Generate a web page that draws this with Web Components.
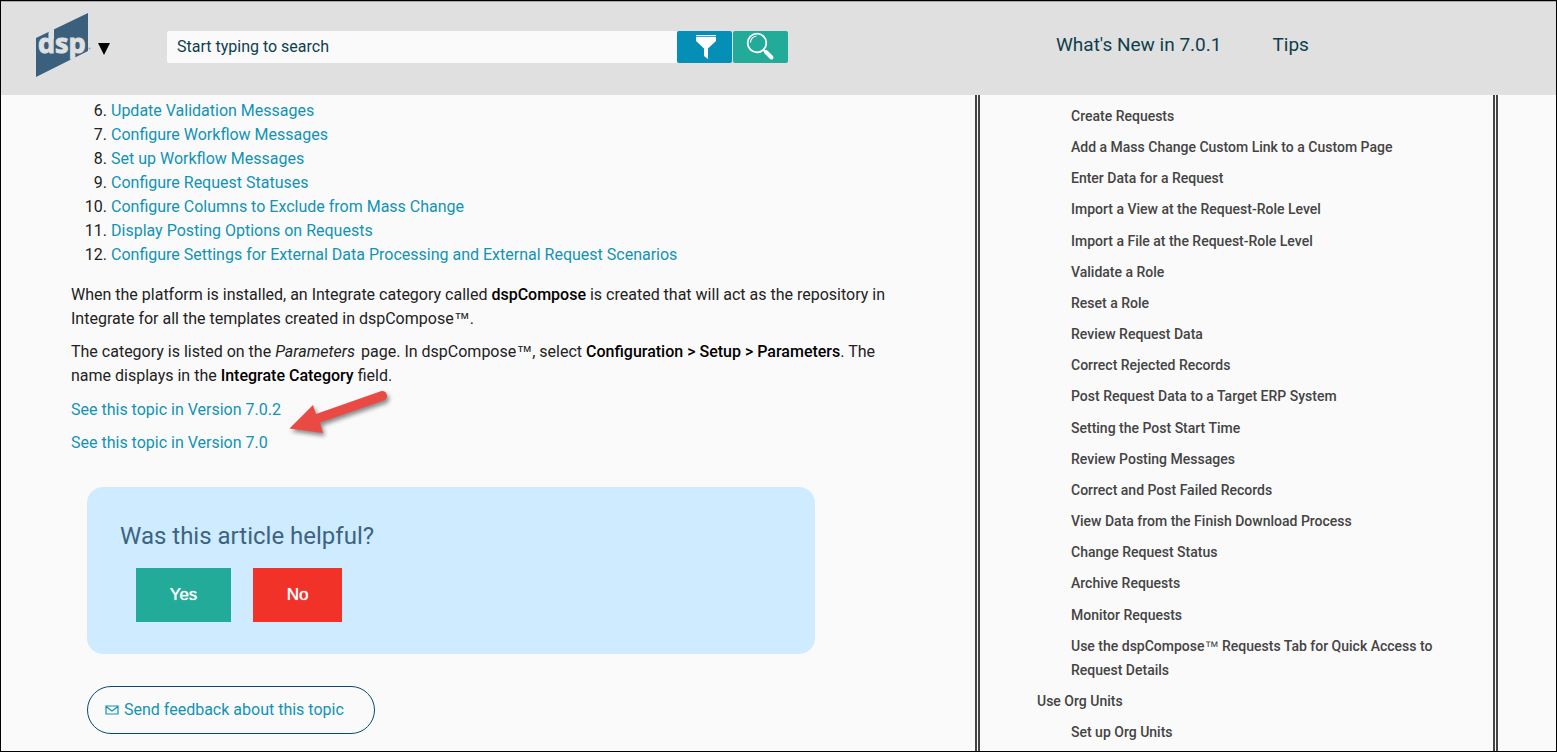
<!DOCTYPE html>
<html lang="en">
<head>
<meta charset="utf-8">
<title>dspCompose Help</title>
<style>
html{background:#000}
body{margin:0;font:16px/24px Roboto,sans-serif;color:#222;background:#fafafa}
</style>
</head>
<body>
<help-page></help-page>
<script>
const define = (name, html, setup) => customElements.define(name, class extends HTMLElement {
  connectedCallback() {
    if (this.shadowRoot) return;
    const t = document.createElement('template');
    t.innerHTML = html;
    this.attachShadow({mode: 'open'}).append(t.content.cloneNode(true));
    if (setup) setup(this.shadowRoot, this);
  }
});

define('dsp-logo', `
<style>
:host{display:block}
a{display:flex;align-items:center;gap:5px;text-decoration:none;color:#000}
svg{display:block}
.mark text{font:700 27px "Open Sans",sans-serif;fill:#e0e0e0;stroke:#e0e0e0;stroke-width:1}
.caret{margin-top:8px}
</style>
<a href="#home" aria-label="dsp home">
<svg class="mark" width="58" height="66" viewBox="0 0 58 66">
<path d="M1 26 L53 1 V39 L1 65Z" fill="#3a607d"/>
<path d="M14 17h5v10h-5z" fill="#e0e0e0"/>
<text x="3" y="41">dsp</text>
<circle cx="54.500" cy="36.500" r="1" fill="#8fa3b2"/>
</svg>
<svg class="caret" width="12" height="12" viewBox="0 0 12 12"><path d="M0 0H12L6 12Z" fill="#000"/></svg>
</a>`);

define('search-bar', `
<style>
:host{display:block}
form{display:flex;gap:1px;margin:0}
input{flex:1;min-width:0;height:32px;box-sizing:border-box;border:0;border-radius:2px 0 0 2px;background:#fafafa;padding:0 10px 2px;font:16px/24px Roboto,sans-serif;color:#0e3f4d;outline:0;margin-right:-1px}
input::placeholder{color:#0e3f4d;opacity:1}
button{width:55px;height:32px;border:0;border-radius:2px;padding:0;display:flex;align-items:center;justify-content:center;background:#058eb6}
button.go{background:#22ab98}
svg{display:block}
</style>
<form role="search">
<input type="text" aria-label="Search" placeholder="Start typing to search">
<button type="button" aria-label="Filter"><svg width="22" height="26" viewBox="0 0 22 26"><path d="M2 1h20v1.200H2zM2 3h20v4l-8 7.500V25l-4-3V14.500L2 7z" fill="#fff"/></svg></button>
<button type="submit" class="go" aria-label="Search"><svg width="30" height="30" viewBox="0 0 30 30" fill="none" stroke="#fff"><circle cx="11" cy="11" r="9.300" stroke-width="1.800"/><path d="M4.500 10.500a6.500 6.500 0 0 1 6-6.500" stroke-width="1.200"/><path d="M17.500 18l2.500 2.500" stroke-width="2"/><path d="M20 20l5.500 5.500" stroke-width="4" stroke-linecap="round"/></svg></button>
</form>`);

define('site-header', `
<style>
:host{display:grid;grid-template-columns:131px minmax(200px,621px) 1fr;align-items:start;height:94px;box-sizing:border-box;padding-left:35px;background:#e0e0e0;border-top:1px solid #aaa}
dsp-logo{margin-top:10px;margin-left:-1px}
search-bar{margin-top:29px}
nav{display:flex;gap:51px;margin:31px 0 0 268px}
a{font-size:19px;line-height:24px;color:#0e3f4d;text-decoration:none;white-space:nowrap}
</style>
<dsp-logo></dsp-logo>
<search-bar></search-bar>
<nav><a href="#new">What's New in 7.0.1</a><a href="#tips">Tips</a></nav>`);

define('step-list', `
<style>
:host{display:block}
ol{margin:0;padding-left:40px}
a{color:#1193b5;text-decoration:none}
</style>
<ol start="6"></ol>`, (root) => {
  const ol = root.querySelector('ol');
  ['Update Validation Messages', 'Configure Workflow Messages', 'Set up Workflow Messages', 'Configure Request Statuses', 'Configure Columns to Exclude from Mass Change', 'Display Posting Options on Requests', 'Configure Settings for External Data Processing and External Request Scenarios'].forEach(s => {
    const li = document.createElement('li'), a = document.createElement('a');
    a.href = '#'; a.textContent = s; li.append(a); ol.append(li);
  });
});

define('pointer-arrow', `
<style>:host{display:block;width:112px;height:56px}svg{display:block;overflow:visible;filter:drop-shadow(2px 3px 2px rgba(0,0,0,.45))}</style>
<svg width="112" height="56" viewBox="0 0 112 56" aria-hidden="true"><path d="M3.500 41.500L27 18L30 27L95.500 4A5 5 0 0 1 99 13L34 35.500L37 46Z" fill="#ea4a44"/></svg>`);

define('helpful-card', `
<style>
:host{display:block;box-sizing:border-box;background:#cfebff;border-radius:16px;padding:32px 33px 32px}
h2{margin:0 0 15px;font-size:24px;line-height:34px;font-weight:400;color:#3c6481}
div{display:flex;gap:22px;padding-left:16px}
button{width:95px;height:54px;border:0;padding:0;font:17px "Liberation Sans",Arial,sans-serif;color:#fff;text-shadow:0 0 1px #fff;background:#22ab98}
.no{width:89px;background:#f03228}
</style>
<h2>Was this article helpful?</h2>
<div><button type="button">Yes</button><button type="button" class="no">No</button></div>`);

define('feedback-link', `
<style>
:host{display:block}
a{display:inline-flex;align-items:center;gap:5px;height:46px;padding:0 30px 0 17px;border:1px solid #094b70;border-radius:24px;color:#1193b5;text-decoration:none}
svg{display:block}
</style>
<a href="#feedback"><svg width="14" height="10" viewBox="0 0 14 10" fill="none" stroke="#1193b5" stroke-width="1.200"><path d="M1 1h12v8H1zM1 1.500l6 4.500 6-4.500"/></svg><span>Send feedback about this topic</span></a>`);

define('topic-article', `
<style>
:host{display:block;padding:4px 78px 17px 70px}
p{margin:0 0 9px}
step-list{margin-bottom:16px}
b{font-weight:500;color:#000}
i{margin-right:2px}
.tm{font-family:"Liberation Sans",Arial,sans-serif;line-height:16px}
a{color:#1193b5;text-decoration:none}
.links{position:relative;margin-top:10px}
pointer-arrow{position:absolute;left:215px;top:-11px}
helpful-card{margin:32px 82px 32px 16px}
feedback-link{margin-left:16px}
</style>
<step-list></step-list>
<p>When the platform is installed, an Integrate category called <b>dspCompose</b> is created that will act as the repository in Integrate for all the templates created in dspCompose<span class="tm">™</span>.</p>
<p>The category is listed on the <i>Parameters</i> page. In dspCompose<span class="tm">™</span>, select <b>Configuration &gt; Setup &gt; Parameters</b>. The name displays in the <b>Integrate Category</b> field.</p>
<div class="links">
<p><a href="#702">See this topic in Version 7.0.2</a></p>
<p><a href="#70">See this topic in Version 7.0</a></p>
<pointer-arrow></pointer-arrow>
</div>
<helpful-card></helpful-card>
<feedback-link></feedback-link>`);

define('topic-nav', `
<style>
:host{display:flex;box-sizing:border-box;border:5px double #444;border-width:0 5px;padding:9px 48px 7px 57px}
nav{flex:1;display:flex}
ul{flex:1;list-style:none;margin:0;padding:0;display:flex;flex-direction:column;justify-content:space-between;gap:7px}
.sub{padding-left:34px}
a{display:block;font-size:14px;line-height:24px;font-weight:500;color:#444;text-decoration:none}
.tm{font-family:"Liberation Sans",Arial,sans-serif;font-weight:400;line-height:16px}
</style>
<nav aria-label="Topics"><ul></ul></nav>`, (root) => {
  const list = root.querySelector('ul');
  const add = (text, cls) => {
    const li = document.createElement('li'), a = document.createElement('a');
    a.href = '#';
    a.innerHTML = text.replace('™', '<span class="tm">™</span>');
    li.className = cls; li.append(a); list.append(li);
  };
  ['Create Requests', 'Add a Mass Change Custom Link to a Custom Page', 'Enter Data for a Request', 'Import a View at the Request-Role Level', 'Import a File at the Request-Role Level', 'Validate a Role', 'Reset a Role', 'Review Request Data', 'Correct Rejected Records', 'Post Request Data to a Target ERP System', 'Setting the Post Start Time', 'Review Posting Messages', 'Correct and Post Failed Records', 'View Data from the Finish Download Process', 'Change Request Status', 'Archive Requests', 'Monitor Requests', 'Use the dspCompose™ Requests Tab for Quick Access to Request Details'].forEach(s => add(s, 'sub'));
  add('Use Org Units', '');
  add('Set up Org Units', 'sub');
});

define('help-page', `
<style>
:host{display:flex;flex-direction:column;box-sizing:border-box;min-height:100vh;border:1px solid #000;background:#fafafa}
main{flex:1;display:grid;grid-template-columns:minmax(0,1fr) 523px 58px}
</style>
<site-header></site-header>
<main><topic-article></topic-article><topic-nav></topic-nav></main>`);
</script>
</body>
</html>
